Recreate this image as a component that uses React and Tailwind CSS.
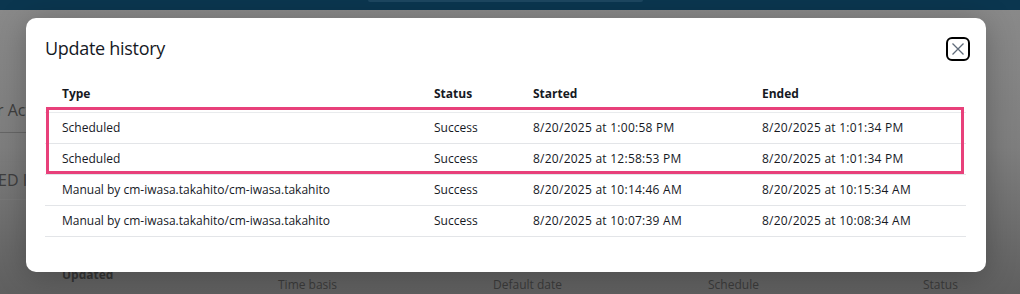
import React from "react";

const rows = [
  ["Scheduled", "Success", "8/20/2025 at 1:00:58 PM", "8/20/2025 at 1:01:34 PM"],
  ["Scheduled", "Success", "8/20/2025 at 12:58:53 PM", "8/20/2025 at 1:01:34 PM"],
  ["Manual by cm-iwasa.takahito/cm-iwasa.takahito", "Success", "8/20/2025 at 10:14:46 AM", "8/20/2025 at 10:15:34 AM"],
  ["Manual by cm-iwasa.takahito/cm-iwasa.takahito", "Success", "8/20/2025 at 10:07:39 AM", "8/20/2025 at 10:08:34 AM"],
];

export default function App() {
  return (
    <div className="relative w-[1020px] h-[294px] overflow-hidden bg-gradient-to-b from-[#8a8a8a] via-[#7e7e7e] to-[#5f5f5f] text-[#16191f] font-['Open_Sans','Noto_Sans',sans-serif]">
      {/* top nav */}
      <div className="h-[10px] bg-[#0b364f] flex justify-center">
        <div className="w-[275px] h-[2px] rounded-b-full bg-[#1d4760] -ml-[10px]" />
      </div>

      {/* dimmed page behind */}
      <div className="pt-[90px] text-[#3e3e3e]">
        <div className="text-[16px] leading-[20px] -ml-[3px]">r Act</div>
        <div className="mt-[12px] h-[1px] w-[30px] bg-[#666]" />
        <div className="mt-[28px] h-[1px] w-[30px] bg-[#7a7a7a]" />
        <div className="mt-[8px] text-[16px] leading-[20px] -ml-[2px]">ED I</div>
        <div className="mt-[9px] h-[1px] w-[30px] bg-[#777]" />
      </div>
      <div className="absolute left-[62px] top-[266px] text-[12px] font-bold text-[#333]">Updated</div>
      <div className="absolute left-[278px] top-[276px] flex text-[12px] text-[#3a3a3a]">
        <span className="w-[215px]">Time basis</span>
        <span className="w-[215px]">Default date</span>
        <span className="w-[215px]">Schedule</span>
        <span className="w-[215px]">Status</span>
      </div>

      {/* modal */}
      <div className="absolute left-[26px] top-[18px] w-[960px] h-[254px] bg-white rounded-[10px] shadow-[0_4px_30px_rgba(0,0,0,0.25)] pl-[19px] pr-[20px]">
        <div className="flex items-center justify-between h-[60px] pt-[2px]">
          <h2 className="text-[18px] leading-[22px] tracking-[-0.3px] text-[#16191f] -mt-[2px]">Update history</h2>
          <button className="w-[24px] h-[24px] border-2 border-black rounded-[6px] flex items-center justify-center -mr-[4px]">
            <svg width="14" height="14" viewBox="0 0 14 14">
              <path d="M1.5 1.5 L12.5 12.5 M12.5 1.5 L1.5 12.5" stroke="#5f6b7a" strokeWidth="1.3" fill="none" />
            </svg>
          </button>
        </div>

        <div className="relative w-[921px]">
          <table className="w-full table-fixed border-collapse text-[12px] text-[#16191f]">
            <colgroup>
              <col className="w-[372px]" />
              <col className="w-[99px]" />
              <col className="w-[229px]" />
              <col className="w-[221px]" />
            </colgroup>
            <thead>
              <tr className="h-[34px] border-b border-[#e9ebed]">
                <th className="text-left font-bold pl-[17px] pb-[2px]">Type</th>
                <th className="text-left font-bold pl-[17px] pb-[2px]">Status</th>
                <th className="text-left font-bold pl-[17px] pb-[2px]">Started</th>
                <th className="text-left font-bold pl-[17px] pb-[2px]">Ended</th>
              </tr>
            </thead>
            <tbody>
              {rows.map((r, i) => (
                <tr key={i} className="h-[31px] border-b border-[#e3e5e8]">
                  <td className="pl-[17px] whitespace-nowrap">{r[0]}</td>
                  <td className="pl-[17px] whitespace-nowrap">{r[1]}</td>
                  <td className="pl-[17px] whitespace-nowrap tracking-[0.25px]">{r[2]}</td>
                  <td className="pl-[17px] whitespace-nowrap tracking-[0.25px]">{r[3]}</td>
                </tr>
              ))}
            </tbody>
          </table>
          {/* highlight annotation */}
          <div className="absolute left-[1px] top-[29px] w-[918px] h-[67px] border-[3px] border-[#e8407a] pointer-events-none" />
        </div>
      </div>
    </div>
  );
}
